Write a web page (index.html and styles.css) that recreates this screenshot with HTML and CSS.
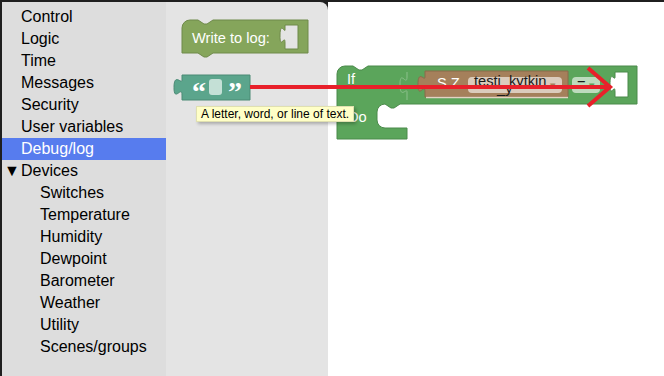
FILE: index.html
```html
<!DOCTYPE html>
<html lang="en">
<head>
    <meta charset="UTF-8">
    <title>Blockly events</title>
    <link rel="stylesheet" href="styles.css">
</head>
<body>
    <div class="app">
        <!-- Category list -->
        <nav class="toolbox">
            <div class="cat">Control</div>
            <div class="cat">Logic</div>
            <div class="cat">Time</div>
            <div class="cat">Messages</div>
            <div class="cat">Security</div>
            <div class="cat">User variables</div>
            <div class="cat selected">Debug/log</div>
            <div class="cat open"><span class="arrow">▼</span>Devices</div>
            <div class="cat sub">Switches</div>
            <div class="cat sub">Temperature</div>
            <div class="cat sub">Humidity</div>
            <div class="cat sub">Dewpoint</div>
            <div class="cat sub">Barometer</div>
            <div class="cat sub">Weather</div>
            <div class="cat sub">Utility</div>
            <div class="cat sub">Scenes/groups</div>
        </nav>
        <div class="flyout"></div>
        <div class="workspace"></div>
    </div>

    <!-- Blocks drawn on the workspace canvas -->
    <svg class="blocks" width="664" height="376" viewBox="0 0 664 376">
        <!-- Write to log -->
        <path class="blk log" fill-rule="evenodd" d="M182,28 a8,8 0 0 1 8,-8 H198 l6,4 h3 l6,-4 H308 V53 H213 l-6,4 h-3 l-6,-4 H182 Z
            M285,25 H298 V49 H285 V43 C285,33 280,51 280,36 S285,33 285,30 Z"/>
        <text class="lbl" x="192" y="43">Write to log:</text>

        <!-- Text block -->
        <path class="blk txt" d="M182,75 H250 V100 H182 V95 C182,85 174,103 174,87.5 S182,85 182,80 Z"/>
        <text class="quote" x="192" y="101">“</text>
        <rect class="field-txt" x="209" y="79" width="13" height="16" rx="3"/>
        <text class="quote" x="228" y="101">”</text>

        <!-- If block with compare -->
        <path class="blk logic" fill-rule="evenodd" d="M337,74 a8,8 0 0 1 8,-8 H353 l6,4 h3 l6,-4 H637 V104 H400 l-6,4 h-3 l-6,-4 a8,8 0 0 0 -8,8 V120 a8,8 0 0 0 8,8 H407 V139 H337 Z
            M615,72 H628 V97 H615 V92 C615,82 610,100 610,84.5 S615,82 615,77 Z"/>
        <path class="seam" d="M407,72 V77 C407,87 400,69 400,84.5 S407,87 407,92 V100"/>
        <text class="lbl" x="347" y="84">If</text>
        <text class="lbl" x="348" y="122">Do</text>

        <!-- Device block -->
        <path class="blk dev" d="M425,71 H568 V97 H425 V92 C425,82 418,100 418,84.5 S425,82 425,77 Z"/>
        <path class="edge" d="M426,97.5 H568"/>
        <text class="lbl" x="437" y="88">S Z</text>
        <rect class="field-dev" x="468" y="77" width="94" height="16" rx="4"/>
        <text class="dd" x="474" y="86">testi_kytkin<tspan x="497" y="93">_y</tspan></text>
        <text class="caret dev-caret" x="550" y="89">▾</text>
        <rect class="field-logic" x="572" y="77" width="28" height="16" rx="4"/>
        <text class="dd" x="577" y="89">=</text>
        <text class="caret logic-caret" x="589" y="89">▾</text>

        <!-- Red arrow -->
        <path class="arrow-line" d="M250,87 H610"/>
        <path class="arrow-line" d="M588,68 L610,87 L588,106"/>
    </svg>

    <div class="tooltip">A letter, word, or line of text.</div>
</body>
</html>
```

FILE: styles.css
```css
* {
    margin: 0;
    padding: 0;
    box-sizing: border-box;
}

body {
    font-family: 'Liberation Sans', Arial, sans-serif;
    background: #1f1f1f;
    width: 664px;
    height: 376px;
    overflow: hidden;
    padding: 2px 0 0 2px;
    position: relative;
}

.app {
    display: flex;
    height: 374px;
}

/* Category list */
.toolbox {
    width: 164px;
    background: #dddddd;
    padding-top: 4px;
}

.cat {
    font-size: 16px;
    line-height: 22px;
    height: 22px;
    color: #000;
    padding-left: 19px;
    white-space: nowrap;
}

.cat.selected {
    background: #577cee;
    color: #ffffff;
}

.cat.open {
    padding-left: 2px;
}

.cat .arrow {
    display: inline-block;
    width: 17px;
}

.cat.sub {
    padding-left: 38px;
}

/* Flyout and workspace */
.flyout {
    width: 162px;
    background: #e4e4e4;
    border-top-right-radius: 8px;
}

.workspace {
    flex: 1;
    background: #ffffff;
}

.blocks {
    position: absolute;
    top: 0;
    left: 0;
    pointer-events: none;
}

.blk {
    stroke-width: 1;
}

.log { fill: #85a55b; stroke: #6f8a4b; }
.txt { fill: #5ba58c; stroke: #4b8a75; }
.logic { fill: #5ba55b; stroke: #4b8a4b; }
.dev { fill: #a5805b; stroke: #8a6a4b; }

.seam {
    fill: none;
    stroke: #8cc08c;
    stroke-width: 1;
}

.edge {
    stroke: #e3d3c3;
    stroke-width: 1.5;
}

.lbl {
    font-family: 'Liberation Sans', Arial, sans-serif;
    font-size: 14.67px;
    fill: #ffffff;
}

.quote {
    font-family: 'Liberation Serif', 'Times New Roman', serif;
    font-weight: bold;
    font-size: 28px;
    fill: #ffffff;
}

.field-txt { fill: #c4e0d6; }
.field-dev { fill: #dbccbd; }
.field-logic { fill: #bddbbd; }

.dd {
    font-family: 'Liberation Sans', Arial, sans-serif;
    font-size: 14.67px;
    fill: #1a1a1a;
}

.caret {
    font-family: 'DejaVu Sans', sans-serif;
    font-size: 11px;
}

.dev-caret { fill: #a5805b; }
.logic-caret { fill: #5ba55b; }

.arrow-line {
    fill: none;
    stroke: #e8202a;
    stroke-width: 4;
}

/* Tooltip */
.tooltip {
    position: absolute;
    left: 196px;
    top: 106px;
    background: #ffffc7;
    border: 1px solid #e0e0b0;
    box-shadow: 2px 2px 3px rgba(0, 0, 0, 0.25);
    font-size: 12px;
    line-height: 14px;
    padding: 0 4px;
    color: #000;
    white-space: nowrap;
}
```
